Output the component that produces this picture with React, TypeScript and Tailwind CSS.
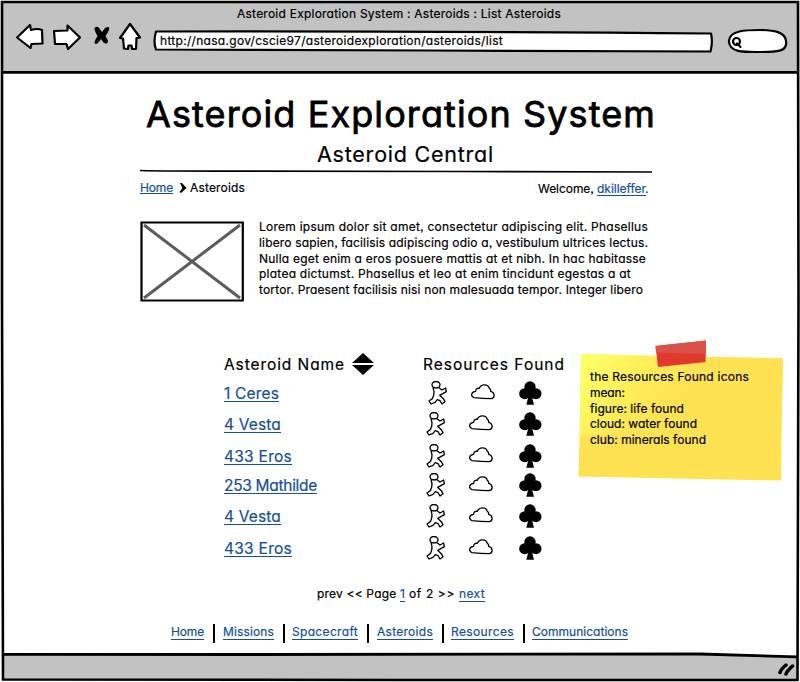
import { useLayoutEffect, useRef, useState, type ReactNode } from "react";
import { clsx } from "clsx";

/** A single line of text, tracked so that it spans exactly `w` pixels. */
function Line({ w, className, children }: { w: number; className?: string; children: ReactNode }) {
  const ref = useRef<HTMLSpanElement>(null);
  const [spacing, setSpacing] = useState(0);
  useLayoutEffect(() => {
    const el = ref.current;
    if (!el) return;
    const count = (el.textContent ?? "").length;
    setSpacing((w - el.getBoundingClientRect().width) / count);
  }, [w]);
  return (
    <span className="block shrink-0 whitespace-pre" style={{ width: w }}>
      <span ref={ref} className={className} style={{ letterSpacing: spacing }}>
        {children}
      </span>
    </span>
  );
}

function Link({ w, className, children }: { w: number; className?: string; children: ReactNode }) {
  return (
    <a className={clsx("block shrink-0 border-b border-[#14509a] text-[#14509a]", className)}>
      <Line w={w}>{children}</Line>
    </a>
  );
}

function Figure() {
  return (
    <svg className="h-[24px] w-[20px]" viewBox="0 0 60 72" fill="white" stroke="black" strokeWidth="4" strokeLinejoin="round">
      <path d="M15 20 L18 32 L17 43 L13 53 L3 60 L9 69 L21 64 L28 56 L36 59 L42 69 L51 62 L46 53 L35 43 L55 32 L53 21 L42 27 L33 20 Z" />
      <ellipse cx="24" cy="11" rx="12" ry="9.500" />
    </svg>
  );
}

function Cloud() {
  return (
    <svg className="h-[16px] w-[24px]" viewBox="0 0 72 48" fill="white" stroke="black" strokeWidth="4" strokeLinejoin="round">
      <path d="M9 41 C-2 37 0 23 14 22 C14 15 19 12 25 13 C30 0 51 -1 55 13 Q60 16 59 22 C73 26 72 43 60 44 Q36 44 9 41 Z" />
    </svg>
  );
}

function Club() {
  return (
    <svg className="h-[24px] w-[23px]" viewBox="0 0 69 72">
      <circle cx="33" cy="18" r="17" />
      <circle cx="17" cy="38" r="16.500" />
      <circle cx="51" cy="38" r="16.500" />
      <path d="M18 26 H50 V52 H40 L45 71 H22 L27 52 H18 Z" />
    </svg>
  );
}

const rows = [
  { name: "1 Ceres", w: 55, h: "h-[31px]", first: true },
  { name: "4 Vesta", w: 57, h: "h-[32px]" },
  { name: "433 Eros", w: 68, h: "h-[29px]" },
  { name: "253 Mathilde", w: 93, h: "h-[31px]" },
  { name: "4 Vesta", w: 57, h: "h-[32px]" },
  { name: "433 Eros", w: 68, h: "h-[31px]" },
];

const intro: [string, number][] = [
  ["Lorem ipsum dolor sit amet, consectetur adipiscing elit. Phasellus", 389],
  ["libero sapien, facilisis adipiscing odio a, vestibulum ultrices lectus.", 389],
  ["Nulla eget enim a eros posuere mattis at et nibh. In hac habitasse", 387],
  ["platea dictumst. Phasellus et leo at enim tincidunt egestas a at", 372],
  ["tortor. Praesent facilisis nisi non malesuada tempor. Integer libero", 384],
];

const note: [string, number][] = [
  ["the Resources Found icons", 159],
  ["mean:", 35],
  ["figure: life found", 94],
  ["cloud: water found", 107],
  ["club: minerals found", 116],
];

const footer: [string, number, string][] = [
  ["Home", 33, "w-[52px]"],
  ["Missions", 51, "w-[69px]"],
  ["Spacecraft", 66, "w-[85px]"],
  ["Asteroids", 56, "w-[74px]"],
  ["Resources", 63, "w-[81px]"],
  ["Communications", 96, "w-[96px]"],
];

function Chrome() {
  return (
    <header className="h-[72px] shrink-0 bg-[#c2c2c2] pt-[5px]">
      <div className="flex justify-center pr-[2px] leading-[17px]">
        <Line w={324}>Asteroid Exploration System : Asteroids : List Asteroids</Line>
      </div>
      <div className="flex pl-[15px]">
        <svg className="h-[30px] w-[128px] shrink-0" viewBox="15 22 128 30" fill="white" stroke="black" strokeWidth="2.200" strokeLinejoin="round">
          <path d="M17 37.500 L30 25 L31 30 Q37 28 42 30 L42.500 43.500 L31.500 44 L30.500 48 Z" />
          <path d="M54 31 L67.500 30.500 L67.500 25.500 L80 37.500 L68 49 L66.500 44 L55 44 Q54.500 37 54 31 Z" />
          <path d="M94.500 28 Q97 25.500 99 28 L102 32 L105.500 27.500 L109 27 Q110.500 29 105.500 36 Q108 40 108 42 Q106.500 45 103.500 42.500 L101 39 Q98 44 95.500 44 Q93 43 97.500 36 Q94 30 94.500 28 Z" fill="black" stroke="none" />
          <path d="M130 24 L140 37.500 L136.500 38 L136 49 L132 49 L131.500 45.500 L128.500 45.500 L128 49 L124 48.500 L123 38.500 L120 38 Z" />
        </svg>
        <div className="relative ml-[10px] h-[24px] w-[562px] shrink-0 self-start pt-[11px] pl-[7px] leading-[16px]">
          <svg className="absolute top-[7px] left-0 h-[25px] w-[562px]" viewBox="153 29 562 25" fill="white" stroke="black" strokeWidth="2.200" strokeLinejoin="round">
            <path d="M156 31.500 Q400 31 711 33.500 Q713 42 710.500 51.500 L430 50.500 L156 49.500 Q153 42 156 31.500 Z" />
          </svg>
          <div className="relative">
            <Line w={343}>http://nasa.gov/cscie97/asteroidexploration/asteroids/list</Line>
          </div>
        </div>
        <svg className="mt-[6px] ml-[11px] h-[28px] w-[64px] shrink-0" viewBox="726 28 64 28" fill="white" stroke="black" strokeWidth="2.200">
          <path d="M729 42 C728 30 747 30 760 30 C774 30 785 32 786 41 C788 52 775 52 762 52 C745 52 730 53 729 42 Z" />
          <circle cx="736.500" cy="41.500" r="3.500" />
          <path d="M737 43.500 L740.500 47" strokeLinecap="round" />
        </svg>
      </div>
    </header>
  );
}

export default function App() {
  return (
    <div className="relative flex h-[682px] w-[800px] flex-col overflow-hidden bg-white font-['Inter','Lato',sans-serif] text-[12px] text-black [-webkit-text-stroke-width:0.2px] [font-feature-settings:'cv11','ss03']">
      <Chrome />

      <main className="h-[582px] shrink-0">
        <h1 className="ml-[146px] pt-[18px] text-[36px] leading-[48px] [-webkit-text-stroke-width:0.8px]">
          <Line w={510}>Asteroid Exploration System</Line>
        </h1>
        <h2 className="ml-[317px] pt-[2px] text-[21.5px] leading-[28px]">
          <Line w={177}>Asteroid Central</Line>
        </h2>
        <svg className="ml-[140px] h-[6px] w-[512px]" viewBox="0 0 512 6">
          <path d="M0 2.500 Q10 3 100 3.200 L320 3.500 L512 4" fill="none" stroke="black" strokeWidth="1.700" />
        </svg>

        <div className="ml-[140px] flex w-[508px] pt-[6px] leading-[16px]">
          <Link w={33} className="h-[14px]">Home</Link>
          <svg className="mt-[3px] ml-[6px] h-[10px] w-[8px]" viewBox="0 0 8 10">
            <path d="M1 0 L3 0 L7.500 5 L2 10 L0.500 9 L3.500 5 Z" />
          </svg>
          <div className="ml-[3px] h-[16px]">
            <Line w={55}>Asteroids</Line>
          </div>
          <div className="mt-px ml-auto flex h-[15px] pr-px">
            <Line w={59}>Welcome, </Line>
            <Link w={49} className="h-[15px]">dkilleffer</Link>
            <span className="-ml-px w-[2px] text-[#14509a]">.</span>
          </div>
        </div>

        <div className="ml-[140px] flex pt-[25px]">
          <svg className="h-[81px] w-[104px]" viewBox="0 0 104 81">
            <path d="M4 4 L100 77 M100 4 L4 77" stroke="#5c5c5c" strokeWidth="3" />
            <path d="M1.500 1.500 H102.800 V79.500 H1.500 Z" fill="none" stroke="black" strokeWidth="2.200" />
          </svg>
          <div className="-mt-[2px] ml-[15px] leading-[15.8px]">
            {intro.map(([text, w]) => (
              <Line key={text} w={w}>{text}</Line>
            ))}
          </div>
        </div>

        <div className="mt-[37px] ml-[224px] flex h-[242px]">
          <section className="w-[354px] shrink-0 pt-[14px] text-[15.5px]">
            <div className="flex h-[26px] leading-[24px]">
              <Line w={121}>Asteroid Name</Line>
              <svg className="ml-[7px] h-[22px] w-[22px]" viewBox="0 0 22 22">
                <path d="M11 0 L22 10 H0 Z M0 12 H22 L11 22 Z" />
              </svg>
              <div className="ml-[49px]">
                <Line w={142}>Resources Found</Line>
              </div>
            </div>
            {rows.map((row, i) => (
              <div key={i} className={clsx("flex", row.h)}>
                <div className="w-[202px] pt-[4px]">
                  <div className="flex">
                    <Link w={row.w} className="h-[19px] leading-[22px]">{row.name}</Link>
                  </div>
                </div>
                <div className={clsx("mt-[2px] flex", row.first && "ml-[2px]")}>
                  <Figure />
                  <div className="ml-[23px] pt-[3px]"><Cloud /></div>
                </div>
                <div className={clsx("mt-[2px]", row.first ? "ml-[24px]" : "ml-[26px]")}>
                  <Club />
                </div>
              </div>
            ))}
          </section>

          <aside className="relative h-[144px] w-[206px] shrink-0 pt-[30px] pl-[12px]">
            <svg className="absolute top-0 left-0 h-[144px] w-[206px]" viewBox="578 339 206 144">
              <defs>
                <linearGradient id="paper" x1="0" y1="0.300" x2="1" y2="0.600">
                  <stop offset="0" stopColor="#ffff68" />
                  <stop offset="0.250" stopColor="#ffee58" />
                  <stop offset="0.500" stopColor="#ffe252" />
                </linearGradient>
              </defs>
              <path d="M581 354 L660 356 L783 358.500 L781.500 440 L781 480.500 L700 479 L578.500 476.500 L580 420 Z" fill="#ffe252" />
              <path d="M581 354 L660 356 L783 358.500 L782 395 L720 424 L640 432 L579.500 436 Z" fill="url(#paper)" />
              <path d="M655.500 346 L706 340.500 L705.500 362 L658 367 Z" fill="#e2382d" />
              <path d="M655.500 346 L706 340.500 L706 354 L656 352.500 Z" fill="#d9524a" />
            </svg>
            <div className="relative leading-[15.8px]">
              {note.map(([text, w]) => (
                <Line key={text} w={w}>{text}</Line>
              ))}
            </div>
          </aside>
        </div>

        <div className="ml-[317px] flex pt-[5px] leading-[15px]">
          <Line w={83}>{"prev << Page "}</Line>
          <Link w={5}>1</Link>
          <div className="ml-[4px]">
            <Line w={50}>{"of 2 >> "}</Line>
          </div>
          <Link w={26}>next</Link>
        </div>

        <footer className="ml-[171px] flex pt-[22px] leading-[15px]">
          {footer.map(([label, w, cell], i) => (
            <div key={label} className={clsx("flex shrink-0", cell)}>
              <Link w={w} className="h-[16px]">{label}</Link>
              {i < footer.length - 1 && <div className="ml-[8.500px] h-[19px] w-[2px] bg-black" />}
            </div>
          ))}
        </footer>
      </main>

      <div className="flex h-[26px] shrink-0 justify-end bg-[#c2c2c2] pt-[8px] pr-[5px]">
        <svg className="h-[14px] w-[18px]" viewBox="0 0 18 14">
          <path d="M3 10.500 Q4 7 9 3 M9 12 Q10 9 15.500 4" fill="none" stroke="black" strokeWidth="3.500" strokeLinecap="round" />
        </svg>
      </div>

      <svg className="pointer-events-none absolute inset-0 h-[682px] w-[800px]" viewBox="0 0 800 682" fill="none" stroke="black" strokeWidth="2.600">
        <path d="M798.500 657 L770 656 L700 654.500 V652 H798.500 Z" fill="white" stroke="none" />
        <path d="M0 0 H800 V682 H0 Z M2 2 V680 L798 681 V2 Z" fill="white" fillRule="evenodd" stroke="none" />
        <path d="M2 2 H798 L798.500 300 L797.500 680 L400 680 L3 679.500 L2 300 Z" />
        <path d="M3 72.300 H798" strokeWidth="2.800" />
        <path d="M3 654.300 L250 654.500 L700 654 L797 656.800" strokeWidth="2.800" />
      </svg>
    </div>
  );
}
